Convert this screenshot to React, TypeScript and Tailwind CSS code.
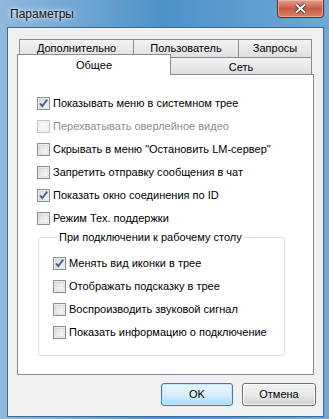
import React from "react";

const FONT = { fontFamily: '"Liberation Sans", Arial, sans-serif' };

function CheckBox({ checked = false, disabled = false }: { checked?: boolean; disabled?: boolean }) {
  return (
    <svg width="13" height="13" viewBox="0 0 13 13" className="shrink-0">
      <defs>
        <linearGradient id="cbfill" x1="0" y1="0" x2="1" y2="1">
          <stop offset="0" stopColor="#d9dadb" />
          <stop offset="1" stopColor="#fbfbfb" />
        </linearGradient>
      </defs>
      <rect x="0.5" y="0.5" width="12" height="12" fill="#f6f6f6" stroke={disabled ? "#c4c4c4" : "#8e8f8f"} />
      <rect x="2" y="2" width="9" height="9" fill={disabled ? "#f4f4f4" : "url(#cbfill)"} stroke={disabled ? "#e6e6e6" : "#c9cacb"} strokeWidth="0.6" />
      {checked && (
        <path d="M3 6.4 L5.2 9.2 L10.2 2.6" fill="none" stroke="#4a5e9e" strokeWidth="1.9" strokeLinejoin="miter" />
      )}
    </svg>
  );
}

function Option({ label, checked, disabled }: { label: string; checked?: boolean; disabled?: boolean }) {
  return (
    <div className="flex h-[23px] items-center gap-[3px]">
      <CheckBox checked={checked} disabled={disabled} />
      <span className={disabled ? "text-[#8e8e8e]" : "text-black"}>{label}</span>
    </div>
  );
}

const backTab =
  "flex items-center justify-center border-l border-t border-[#898c95] bg-gradient-to-b from-[#f3f3f3] to-[#dfdfdf]";

export default function App() {
  return (
    <div
      className="relative h-[419px] w-[329px] overflow-hidden bg-gradient-to-r from-[#8fb8dc] via-[#4b92c8] to-[#6ea8d8] text-[11px] leading-[13px]"
      style={FONT}
    >
      {/* title bar */}
      <div className="flex h-[27px] items-start justify-between pl-[10px] pr-[5px]">
        <div className="mt-[7px] text-[12px] leading-[14px] text-[#111] [text-shadow:0_0_6px_#e8f2fb,0_0_3px_#e8f2fb]">Параметры</div>
        <div className="flex h-[18px] w-[47px] items-center justify-center rounded-b-[4px] border border-t-0 border-[#6b2a22] bg-gradient-to-b from-[#e3a08f] via-[#c85a43] to-[#d7846a] shadow-[inset_0_0_0_1px_rgba(255,210,200,0.5)]">
          <svg width="13" height="11" viewBox="0 0 13 11">
            <path d="M2 1.5 L11 9.5 M11 1.5 L2 9.5" stroke="#3a1a14" strokeWidth="3.6" />
            <path d="M2 1.5 L11 9.5 M11 1.5 L2 9.5" stroke="#ffffff" strokeWidth="2.2" />
          </svg>
        </div>
      </div>

      {/* client area */}
      <div className="ml-[7px] mr-[5px] flex h-[390px] flex-col border border-[#3d6a92] bg-[#f0f0f0]">
        <div className="pl-[9px] pt-[11px]">
          <div className="w-[297px]">
            {/* back row */}
            <div className="flex h-[18px] px-[2px] text-black">
              <div className={`${backTab} w-[114px] pb-[1px]`}>Дополнительно</div>
              <div className={`${backTab} w-[105px] pb-[1px]`}>Пользователь</div>
              <div className={`${backTab} w-[74px] border-r pb-[1px]`}>Запросы</div>
            </div>
            {/* front row */}
            <div className="-mt-[3px] flex h-[20px] items-start">
              <div className="relative z-10 flex h-[21px] w-[154px] items-start justify-center border-l border-r border-t border-[#898c95] bg-white pt-[4px]">
                Общее
              </div>
              <div className="mt-[3px] flex h-[17px] w-[141px] items-center justify-center border-r border-t border-[#898c95] bg-gradient-to-b from-[#f3f3f3] to-[#dfdfdf] pt-[2px]">
                Сеть
              </div>
            </div>
            {/* panel */}
            <div className="h-[301px] border border-[#898c95] bg-white pl-[19px] pt-[17px]">
              <Option label="Показывать меню в системном трее" checked />
              <Option label="Перехватывать оверлейное видео" disabled />
              <Option label={'Скрывать в меню "Остановить LM-сервер"'} />
              <Option label="Запретить отправку сообщения в чат" />
              <Option label="Показать окно соединения по ID" checked />
              <Option label="Режим Тех. поддержки" />
              <fieldset className="ml-[1px] mt-[1px] w-[247px] rounded-[3px] border border-[#d5dfe5] pb-[11px] pl-[14px] pt-[8px]">
                <legend className="ml-[4px] px-[2px] text-black">При подключении к рабочему столу</legend>
                <Option label="Менять вид иконки в трее" checked />
                <Option label="Отображать подсказку в трее" />
                <Option label="Воспроизводить звуковой сигнал" />
                <Option label="Показать информацию о подключение" />
              </fieldset>
            </div>
          </div>
        </div>

        {/* buttons */}
        <div className="mt-[8px] flex justify-end gap-[9px] pr-[7px]">
          <button
            className="h-[23px] w-[72px] rounded-[3px] border border-[#3c7fb1] bg-gradient-to-b from-[#eaf6fd] via-[#d9f0fc] to-[#a7d9f5] text-black shadow-[inset_0_0_0_1px_#c0e4f8]"
            style={FONT}
          >
            OK
          </button>
          <button
            className="h-[23px] w-[74px] rounded-[3px] border border-[#707070] bg-gradient-to-b from-[#f2f2f2] via-[#ebebeb] to-[#cfcfcf] text-black shadow-[inset_0_0_0_1px_#fbfbfb]"
            style={FONT}
          >
            Отмена
          </button>
        </div>
      </div>
    </div>
  );
}
